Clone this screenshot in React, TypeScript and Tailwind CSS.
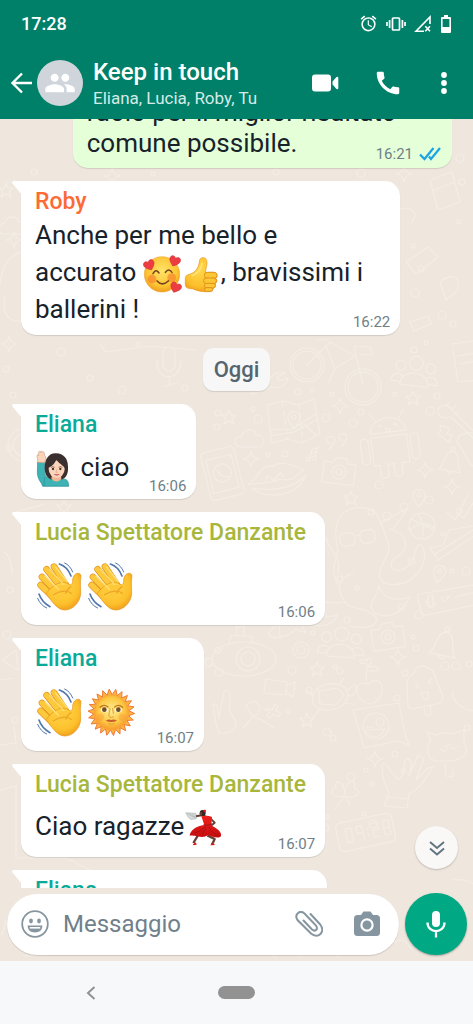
import type { ReactNode } from 'react';
import { MdAccessAlarm, MdCall, MdPeople } from 'react-icons/md';

type Message = {
  id: number;
  author: string;
  color: string;
  lines: ReactNode[];
  time: string;
  body: string;
  bubble?: string;
};

const TEAL = 'text-[#0aaa99]';
const LIME = 'text-[#a8b73c]';
const ORANGE = 'text-[#fc6a35]';

/* ---------- emoji ---------- */

function EmojiGradients() {
  return (
    <svg className="absolute h-0 w-0" aria-hidden="true">
      <defs>
        <radialGradient id="face" cx="0.5" cy="0.4" r="0.6">
          <stop offset="0" stopColor="#ffe36b" />
          <stop offset="0.7" stopColor="#fdc633" />
          <stop offset="1" stopColor="#f0a01f" />
        </radialGradient>
        <radialGradient id="palm" cx="0.45" cy="0.35" r="0.7">
          <stop offset="0" stopColor="#ffd84a" />
          <stop offset="0.7" stopColor="#fdc02c" />
          <stop offset="1" stopColor="#ee9a18" />
        </radialGradient>
        <radialGradient id="sun" cx="0.5" cy="0.45" r="0.55">
          <stop offset="0" stopColor="#ffee96" />
          <stop offset="0.65" stopColor="#fdca45" />
          <stop offset="1" stopColor="#f79a2c" />
        </radialGradient>
        <linearGradient id="dress" x1="0" y1="0" x2="0" y2="1">
          <stop offset="0" stopColor="#f1201b" />
          <stop offset="1" stopColor="#c50d10" />
        </linearGradient>
      </defs>
    </svg>
  );
}

function WavingHand() {
  const fingers = ['M121 566 L162 606', 'M125 542 L174 592', 'M139 519 L188 580', 'M161 511 L202 574'];
  return (
    <svg role="img" aria-label="👋" viewBox="104 494 153 153" className="-my-1 inline-block size-[51px] align-middle">
      {fingers.map((d) => (
        <g key={d} fill="none" strokeLinecap="round">
          <path d={d} stroke="#e2921b" strokeWidth="20" />
          <path d={d} stroke="#fdc93c" strokeWidth="16" />
        </g>
      ))}
      <path
        d="M137 592 C150 573 176 552 199 560 C209 566 214 570 217 556 C216 544 222 532 232 531 C242 530 243 539 241 547 C239 559 241 574 241 591 C240 617 218 641 194 641 C170 641 157 617 137 592Z"
        fill="url(#palm)"
        stroke="#e2921b"
        strokeWidth="2"
      />
      <path d="M150 588 L178 566 L202 566 L212 578 L190 600 L160 604Z" fill="#fdc83a" />
      <path d="M158 596 C181 582 203 581 214 592 M213 570 C203 577 197 583 196 592" fill="none" stroke="#eda526" strokeWidth="4" />
      <path d="M134 539 L174 579 M148 519 L190 565 M166 512 L201 556" stroke="#ffdf76" strokeWidth="4" strokeLinecap="round" />
      <g fill="none" stroke="#5277ad" strokeLinecap="round">
        <path d="M177 503 C192 508 205 520 212 539" strokeWidth="5" />
        <path d="M193 500 C204 505 212 514 217 527" strokeWidth="3" />
        <path d="M116 593 C121 608 133 622 149 631" strokeWidth="5" />
        <path d="M112 606 C117 619 127 630 139 635" strokeWidth="3" />
      </g>
    </svg>
  );
}

function SunFace() {
  const rays = Array.from({ length: 44 }, (_, i) => {
    const radius = i % 2 ? 53 : 70;
    const angle = (i * Math.PI) / 22 + 0.05;
    return `${(331 + radius * Math.cos(angle)).toFixed(1)},${(244 + radius * Math.sin(angle)).toFixed(1)}`;
  }).join(' ');
  return (
    <svg role="img" aria-label="🌞" viewBox="255 168 153 153" className="-my-1 inline-block size-[51px] align-middle">
      <polygon points={rays} fill="#ffb340" stroke="#ee7a34" strokeWidth="3" />
      <circle cx="331" cy="244" r="52" fill="url(#sun)" stroke="#f5a23a" strokeWidth="2" />
      <circle cx="298" cy="259" r="11" fill="#f89a3d" opacity="0.45" />
      <circle cx="364" cy="259" r="11" fill="#f89a3d" opacity="0.45" />
      <path d="M297 229 Q309 218 321 228 M341 228 Q353 218 365 229" fill="none" stroke="#bd7622" strokeWidth="4" strokeLinecap="round" />
      <ellipse cx="310" cy="237" rx="11" ry="7" fill="#fff8dc" />
      <ellipse cx="352" cy="237" rx="11" ry="7" fill="#fff8dc" />
      <circle cx="310" cy="236" r="7" fill="#704e2c" />
      <circle cx="352" cy="236" r="7" fill="#704e2c" />
      <path d="M327 232 C327 244 320 255 326 258 Q331 261 337 258 M335 232 L337 247" fill="none" stroke="#e2992e" strokeWidth="3" strokeLinecap="round" />
      <path d="M314 269 Q324 263 331 267 Q338 263 348 269 Q331 277 314 269Z" fill="#c95c2c" />
      <path d="M322 278 Q331 282 341 278" fill="none" stroke="#e69a34" strokeWidth="3" />
    </svg>
  );
}

function Heart({ x, y, turn }: { x: number; y: number; turn: number }) {
  return (
    <path
      transform={`translate(${x} ${y}) rotate(${turn})`}
      d="M0 16 C-9 9 -18 2 -16 -7 C-14 -15 -4 -16 0 -8 C4 -16 14 -15 16 -7 C18 2 9 9 0 16Z"
      fill="#ee3c43"
      stroke="#c9262f"
      strokeWidth="1.5"
    />
  );
}

function SmilingHearts() {
  return (
    <svg role="img" aria-label="🥰" viewBox="429 250 117 117" className="-my-1 inline-block size-[39px] align-middle">
      <circle cx="486" cy="308" r="53" fill="url(#face)" stroke="#e99a22" strokeWidth="1.5" />
      <circle cx="456" cy="322" r="13" fill="#f5732b" opacity="0.55" />
      <circle cx="515" cy="318" r="13" fill="#f5732b" opacity="0.55" />
      <path d="M459 306 Q467 290 477 304 M496 302 Q506 288 516 302" fill="none" stroke="#75431f" strokeWidth="4.5" strokeLinecap="round" />
      <path d="M471 328 Q487 345 505 328" fill="none" stroke="#75431f" strokeWidth="5" strokeLinecap="round" />
      <Heart x={448} y={280} turn={-24} />
      <Heart x={524} y={268} turn={20} />
      <Heart x={527} y={347} turn={22} />
    </svg>
  );
}

function ThumbsUp() {
  return (
    <svg role="img" aria-label="👍" viewBox="546 250 117 117" className="-my-1 inline-block size-[39px] align-middle">
      <path
        d="M556 321 C556 309 565 309 574 306 C588 300 596 287 598 272 C598 262 602 258 610 258 C621 258 623 272 619 286 L616 302 L642 302 C653 304 654 317 647 320 C653 324 651 334 645 336 C649 341 646 349 639 350 C639 357 633 360 624 360 C605 361 589 357 577 351 C563 352 556 348 556 338Z"
        fill="url(#palm)"
        stroke="#e2921b"
        strokeWidth="2"
      />
      <g fill="#fdc634" stroke="#dc8b1c" strokeWidth="2.5">
        <rect x="613" y="302" width="38" height="18" rx="9" />
        <rect x="611" y="319" width="38" height="17" rx="8" />
        <rect x="613" y="335" width="33" height="14" rx="7" />
        <rect x="614" y="348" width="24" height="11" rx="5" />
      </g>
      <path d="M576 312 C592 306 604 294 606 275" fill="none" stroke="#ffe27a" strokeWidth="5" strokeLinecap="round" />
    </svg>
  );
}

function WomanRaisingHand() {
  return (
    <svg role="img" aria-label="🙋🏻‍♀️" viewBox="105 162 117 117" className="-my-1 inline-block size-[39px] align-middle">
      <path
        d="M113 198 L134 199 C134 215 132 232 138 242 C150 250 190 246 199 251 C205 256 206 264 206 271 L128 271 C126 260 113 252 112 230Z"
        fill="#3fb3b4"
        stroke="#218c97"
        strokeWidth="2"
      />
      <path d="M132 270 C133 259 131 248 136 242" fill="none" stroke="#218c97" strokeWidth="2" />
      <path
        d="M114 199 L111 181 C111 174 115 175 116 179 L116 168 C119 163 122 166 122 170 C123 163 127 164 128 169 C132 166 134 171 133 178 L137 181 C139 190 135 195 133 200Z"
        fill="#fbd4ba"
        stroke="#d69f83"
        strokeWidth="2"
      />
      <path
        d="M168 172 C146 171 134 190 134 215 C134 237 143 247 157 251 L187 250 C200 244 205 231 204 213 C204 187 191 173 168 172Z"
        fill="#3b3030"
      />
      <path d="M156 236 L183 236 L184 249 Q170 264 154 249Z" fill="#edb797" />
      <ellipse cx="170" cy="219" rx="24" ry="26" fill="#fbd5bb" />
      <path d="M145 216 C155 211 165 202 169 191 C178 203 190 208 196 218 C198 195 188 182 170 181 C152 183 144 197 145 216Z" fill="#3b3030" />
      <path d="M153 214 Q158 210 164 214 M176 214 Q182 210 187 214" fill="none" stroke="#5d3a2b" strokeWidth="2" />
      <circle cx="159" cy="219" r="3.5" fill="#4b3326" />
      <circle cx="181" cy="219" r="3.5" fill="#4b3326" />
      <path d="M170 220 L168 229 L173 229" fill="none" stroke="#dc9f80" strokeWidth="2" />
      <path d="M161 234 Q170 243 180 234 Q170 236 161 234Z" fill="#c94a4d" />
    </svg>
  );
}

function Dancer() {
  return (
    <svg role="img" aria-label="💃🏿" viewBox="556 156 117 117" className="-my-1 inline-block size-[39px] align-middle">
      <path d="M561 167 L592 169 L593 185 L577 188 Q566 181 561 167Z" fill="#d5d9da" stroke="#a8aeb0" strokeWidth="1.5" />
      <path d="M563 169 L590 182 M570 169 L590 182 M580 169 L590 182" stroke="#999fa2" />
      <path d="M592 178 L613 174 L625 181" fill="none" stroke="#654234" strokeWidth="6" strokeLinejoin="round" />
      <path d="M635 184 L648 197 L635 208" fill="none" stroke="#654234" strokeWidth="6" strokeLinejoin="round" />
      <path d="M604 225 L584 258 M626 235 L648 246 L640 263" fill="none" stroke="#654234" strokeWidth="7" strokeLinejoin="round" />
      <path d="M588 256 L582 265 L594 263 L592 257Z M639 258 L651 264 L635 265Z" fill="#df1919" />
      <circle cx="612" cy="168" r="9" fill="#302723" />
      <ellipse cx="607" cy="170" rx="4" ry="6" fill="#654234" />
      <circle cx="618" cy="162" r="4" fill="#e11b1c" />
      <path
        d="M608 178 Q625 173 640 180 L638 205 C652 214 671 224 667 238 C658 247 641 238 627 234 C612 247 594 233 573 236 C575 219 594 207 617 204Z"
        fill="url(#dress)"
      />
      <path d="M621 208 Q602 226 585 229 M630 210 Q639 229 659 236 M622 211 L612 230" fill="none" stroke="#9c0c12" strokeWidth="2" />
      <path d="M614 203 Q630 208 640 200" fill="none" stroke="#87151a" strokeWidth="2" />
    </svg>
  );
}

/* ---------- chat wallpaper ---------- */

const stars = [[413, 398], [229, 417], [351, 498], [317, 669], [307, 720], [64, 507], [6, 190], [440, 140], [204, 820]];
const sparkles = [[340, 406], [251, 459], [425, 470], [452, 487], [398, 657], [375, 759], [112, 176], [9, 344], [14, 240], [404, 174]];
const dots = [
  [298, 392, 3], [312, 390, 2], [258, 419, 4], [253, 409, 2], [326, 418, 4], [353, 423, 4], [268, 455, 2], [285, 454, 3],
  [361, 412, 3], [395, 394, 2], [430, 411, 4], [437, 396, 3], [332, 394, 2], [414, 350, 3], [426, 343, 2], [388, 430, 2],
  [379, 485, 4], [429, 500, 4], [404, 507, 4], [371, 512, 3], [387, 516, 4], [459, 511, 3], [443, 534, 2], [412, 561, 3],
  [452, 571, 2], [466, 571, 4], [413, 637, 2], [416, 648, 3], [419, 615, 4], [347, 620, 3], [313, 633, 2], [292, 670, 4],
  [335, 667, 2], [340, 671, 3], [405, 673, 3], [445, 666, 4], [456, 666, 4], [469, 664, 3], [309, 690, 3], [288, 711, 2],
  [397, 698, 3], [327, 732, 4], [333, 738, 3], [395, 754, 3], [403, 771, 2], [366, 770, 2], [351, 777, 4], [372, 784, 2],
  [364, 814, 2], [373, 824, 4], [327, 817, 2], [326, 828, 3], [6, 369, 3], [13, 395, 3], [61, 352, 4], [90, 378, 3],
  [122, 390, 4], [217, 427, 3], [219, 672, 4], [218, 650, 3], [9, 448, 3], [7, 635, 4], [15, 720, 3], [218, 413, 3],
  [413, 144, 2], [460, 158, 4], [462, 182, 3], [413, 246, 2], [421, 269, 3], [442, 315, 4], [453, 324, 3], [415, 293, 4],
  [459, 222, 2], [34, 172, 3], [153, 174, 2], [276, 172, 3], [361, 173, 4], [185, 388, 3], [138, 344, 2], [467, 728, 3],
  [208, 570, 2], [10, 590, 3], [340, 579, 3], [357, 588, 2], [401, 607, 3],
];

function Wallpaper() {
  return (
    <svg
      aria-hidden="true"
      viewBox="0 119 473 842"
      preserveAspectRatio="xMidYMin slice"
      className="absolute inset-0 h-full w-full"
      fill="none"
      stroke="#f4ede6"
      strokeWidth="1.2"
      strokeLinecap="round"
      strokeLinejoin="round"
    >
      <defs>
        <path id="star" d="M0 -7 L2 -2 L7 -2 L3 2 L5 7 L0 4 L-5 7 L-3 2 L-7 -2 L-2 -2Z" />
        <path id="sparkle" d="M0 -8 Q1 -1 8 0 Q1 1 0 8 Q-1 1 -8 0 Q-1 -1 0 -8Z" />
        <g id="camera">
          <path d="M-16 -9 L-7 -9 L-4 -14 L6 -14 L8 -9 L16 -9 L16 12 L-16 12Z" />
          <circle r="7" />
          <circle r="3" />
        </g>
        <g id="people">
          <circle cy="-11" r="7" />
          <circle cx="-15" cy="-7" r="5" />
          <circle cx="15" cy="-7" r="5" />
          <path d="M-14 12 C-15 -5 15 -5 14 12Z M-12 3 C-19 -1 -23 3 -23 9 L-14 9 M12 3 C19 -1 23 3 23 9 L14 9" />
        </g>
        <g id="bell">
          <path d="M-11 8 C-5 1 -9 -10 0 -12 C9 -10 5 1 11 8Z" />
          <path d="M-3 8 Q0 14 3 8" />
          <circle cy="-14" r="2" />
        </g>
        <g id="pin">
          <path d="M0 9 C-4 3 -7 0 -6 -4 C-4 -10 4 -10 6 -4 C7 0 4 3 0 9Z" />
          <circle cy="-3" r="2" />
        </g>
        <path id="cloud" d="M-9 8 C-17 7 -17 -2 -8 -3 C-7 -11 5 -11 6 -4 C16 -4 16 7 8 8Z" />
      </defs>

      {stars.map(([x, y]) => <use key={`${x}-${y}`} href="#star" x={x} y={y} />)}
      {sparkles.map(([x, y]) => <use key={`${x}-${y}`} href="#sparkle" x={x} y={y} />)}
      {dots.map(([x, y, r]) => <circle key={`${x}-${y}`} cx={x} cy={y} r={r} />)}

      <use href="#cloud" x="250" y="439" />
      <use href="#cloud" x="13" y="226" />
      <use href="#camera" transform="translate(339 472) rotate(7)" />
      <use href="#camera" transform="translate(388 637) rotate(-9)" />
      <use href="#people" transform="translate(415 374) rotate(7)" />
      <use href="#people" x="341" y="645" transform="rotate(4 341 645)" />
      <use href="#bell" transform="translate(451 463) rotate(10)" />
      <use href="#bell" transform="translate(444 646) rotate(12) scale(1.2)" />
      <use href="#pin" x="419" y="498" />
      <use href="#pin" transform="translate(439 574) rotate(12)" />

      {/* bicycle */}
      <circle cx="307" cy="365" r="17" />
      <circle cx="307" cy="365" r="14" />
      <circle cx="363" cy="387" r="18" />
      <circle cx="363" cy="387" r="15" />
      <path d="M307 365 L330 342 L355 356 L335 369 L326 346 M363 385 L354 346 L370 347 L373 355 L360 354 M318 340 L329 339 M335 369 L329 382" />
      {/* microphone and spanner */}
      <rect x="163" y="347" width="12" height="24" rx="6" />
      <path d="M157 361 C156 382 181 382 181 361 M169 376 L170 386 M162 387 L177 383" />
      <path d="M248 389 L268 383 C270 374 279 371 285 373 L277 377 L279 381 L288 378 C287 386 278 389 272 387 L252 394Z" />
      {/* map */}
      <path d="M267 405 L283 401 L298 405 L314 399 L320 434 L302 443 L287 439 L272 443Z M269 430 L292 429 L316 414 M270 436 L294 432 L318 419 M304 424 L316 435" />
      <path d="M282 402 L288 439 M299 405 L303 442" strokeDasharray="5 4" />
      <use href="#pin" x="294" y="420" />
      {/* android */}
      <g transform="translate(390 447) rotate(-7)">
        <path d="M-18 -15 C-17 -34 17 -34 18 -15Z M-12 -28 L-17 -36 M12 -28 L18 -36 M-18 -11 L18 -11 L18 17 L10 17 L10 28 Q5 33 2 28 L2 17 L-4 17 L-4 28 Q-9 33 -12 28 L-12 17 L-18 17Z" />
        <rect x="-29" y="-11" width="8" height="26" rx="4" />
        <rect x="21" y="-11" width="8" height="26" rx="4" />
        <circle cx="-7" cy="-22" r="1" />
        <circle cx="8" cy="-22" r="1" />
      </g>
      {/* lips, quotes, note, bolt */}
      <path d="M248 485 C258 478 262 463 273 466 C281 460 292 465 304 470 C293 476 296 482 280 479 C269 484 262 482 248 485Z M252 488 C263 499 296 499 306 475 C292 490 271 491 252 488 M266 482 L267 476 L274 480 L280 473 L284 477" />
      <path d="M329 449 C335 445 336 438 333 437 C325 434 325 445 332 443 M341 446 C347 442 348 435 345 434 C337 431 337 442 344 440" />
      <path d="M309 459 L312 450 L318 447 L315 457 M311 454 L317 451" />
      <circle cx="308" cy="459" r="2" />
      <circle cx="314" cy="458" r="2" />
      <path d="M440 425 L449 428 L447 434 L452 435 L449 442 L437 433 L441 431Z" />
      {/* phone */}
      <g transform="rotate(-14 222 472)">
        <rect x="205" y="449" width="34" height="49" rx="4" />
        <rect x="209" y="457" width="26" height="34" />
        <circle cx="222" cy="473" r="9" />
        <path d="M218 469 Q219 477 227 478" />
      </g>
      {/* guitar */}
      <path d="M438 413 C437 404 448 403 452 410 L480 437 M438 413 C442 420 447 418 451 417 L473 438 M447 405 L450 402 M453 408 L456 405 M455 414 L458 411 M473 433 C463 432 457 435 457 443 C465 450 465 461 473 466" />
      {/* octopus */}
      <path d="M338 585 C329 569 337 560 338 550 C335 539 331 512 355 508 C384 504 381 531 388 541 C393 555 377 566 380 577 C383 588 405 587 416 575 C430 561 424 542 418 545 C413 556 413 567 401 570 C387 572 389 560 398 556 C410 548 408 533 389 529 M380 523 L408 508 L393 529 M353 574 C336 576 337 591 345 602 C349 610 367 607 375 616 C381 625 367 630 350 626 M379 585 C377 601 365 602 375 613 C387 620 402 614 410 597 C392 603 381 596 379 585 M326 538 C330 553 341 553 338 573 M305 616 C308 595 330 605 345 602 M306 617 C312 631 334 627 337 615 C323 620 320 611 314 608" />
      <rect x="340" y="533" width="15" height="13" rx="5" transform="rotate(-9 347 540)" />
      <rect x="360" y="530" width="15" height="13" rx="5" transform="rotate(-9 367 536)" />
      <path d="M354 536 L361 535" />
      {/* ball, shoe, double tick */}
      <circle cx="422" cy="526" r="13" />
      <path d="M410 530 Q422 519 434 528 M418 514 Q426 526 422 539 M411 519 L434 530" />
      <path d="M430 548 L443 545 L449 530 L473 526 M430 548 L438 560 L478 533 M435 554 L473 530" />
      <path d="M447 512 L455 520 L468 495 M458 514 L464 518 L476 498" />
      {/* voice message card */}
      <path d="M480 584 L420 594 Q417 594 418 598 L421 611 Q422 616 427 615 L480 604 M441 598 L450 596 L444 602Z M455 597 L480 591" />
      <rect x="428" y="595" width="5" height="11" rx="2" />
      <path d="M426 601 Q430 613 436 603" />
      {/* submarine */}
      <ellipse cx="244" cy="659" rx="32" ry="17" />
      <circle cx="248" cy="659" r="12" />
      <circle cx="248" cy="659" r="7" />
      <path d="M229 644 L231 635 L253 637 L252 643 M237 634 L236 619 L244 618 L244 635 M236 623 L244 621 M236 628 L244 626 M213 660 C202 652 202 674 213 664" />
      {/* fish, gear, video camera */}
      <path d="M268 634 C277 620 290 620 297 625 L307 618 L302 626 L306 633 L296 629 C288 637 274 641 268 634Z M279 623 L280 637" />
      <circle cx="301" cy="650" r="4" />
      <circle cx="301" cy="650" r="8" strokeDasharray="4 2" />
      <path d="M266 679 L287 682 L286 695 L264 693Z M287 685 L295 682 L293 697 L286 692 M267 708 L272 710 L275 704 L278 706 L276 711 L281 713 L279 717 L273 714 L270 718 L267 716 L270 711 L265 710Z" />
      {/* turtle and cherry */}
      <ellipse cx="330" cy="697" rx="18" ry="13" transform="rotate(-14 330 697)" />
      <path d="M319 691 L337 688 L344 695 L336 705 L320 704Z M312 695 L306 691 M320 709 L313 717 M346 703 L355 705 M340 684 L344 678 M348 690 Q357 680 356 690 Q354 698 348 695" />
      <path d="M368 684 C351 677 355 704 372 704 C389 696 383 671 368 684Z M366 681 L367 664 C355 664 360 656 367 661 C367 655 376 658 368 667 C379 664 385 672 369 671" />
      {/* ice lolly */}
      <path d="M408 707 L407 681 C409 675 415 676 416 668 C425 663 434 669 436 679 L443 697 Q443 703 436 704 L412 709Z M424 708 L426 716 L431 714 L430 706 M415 683 L419 685 L416 688 M432 679 L428 682 L432 684 M421 693 L428 692 Q429 702 424 699Z" />
      {/* sticker */}
      <path d="M353 710 L399 703 L405 734 L409 745 L398 741 L364 748Z" />
      <circle cx="376" cy="726" r="13" />
      <path d="M366 727 L372 727 M365 730 Q376 744 385 729 L367 730" />
      <circle cx="380" cy="722" r="4" />
      {/* cat, hand, clover */}
      <path d="M434 761 C425 755 427 744 431 740 L427 732 L437 735 Q444 731 452 734 L464 730 L464 742 C472 757 459 760 449 761Z M445 747 L450 744 M448 748 Q445 753 440 749 M451 747 Q454 751 458 746 M445 763 L446 776 L453 777 L453 770 M480 710 C463 714 451 700 453 691" />
      <path d="M384 806 L407 808 L409 793 C421 790 426 776 433 767 L428 768 L416 780 L424 758 L418 755 L409 776 C413 763 411 758 406 759 C402 765 407 776 398 779 C386 768 384 758 382 766 C382 778 385 784 389 793Z M386 797 L408 799" />
      <path d="M345 796 C331 799 328 789 336 788 C333 778 344 780 345 794 C345 779 358 778 354 788 C365 792 354 800 345 796 M345 796 L334 810 M345 796 L350 805" />
      {/* clock */}
      <g transform="rotate(-12 365 832)">
        <rect x="337" y="818" width="57" height="29" rx="5" />
        <path d="M346 825 H352 V839 H346Z M363 832 H357 V825 H363 V839 M368 829 V830 M368 835 V836 M373 825 H379 V832 H373 V839 H379 M384 825 H390 V839 H384Z M384 832 H390" />
      </g>
      {/* left edge */}
      <circle cx="24" cy="445" r="16" />
      <circle cx="24" cy="445" r="11" />
      <path d="M0 284 C4 252 20 254 24 250 M5 296 Q0 322 22 321 M12 513 L45 504 M4 552 Q12 557 12 574 M0 680 L14 678 M2 660 L16 650 L18 670Z M0 745 L16 743 L14 726 M0 790 L16 786 V858 H66 L90 870 M100 345 L106 352 L150 346 L196 350" />
      <path d="M216 724 L213 705 Q217 700 219 718 L224 692 Q233 685 229 710 L236 722 Q236 735 219 733Z M243 728 L253 717 L262 720 L274 728 M246 705 Q256 697 260 708 Q255 725 246 705Z" />
      <path d="M402 128 L412 123 L416 131 M398 210 C412 204 420 214 411 223 M430 180 L452 172 L460 202 L438 210Z M434 190 L455 182 M406 262 L428 247 L438 257 L416 274Z M440 282 C452 270 464 280 456 292 L446 300Z M410 322 L428 316 L431 324 L414 331Z M452 344 L480 340 M453 350 L458 382 L480 380 M458 356 L480 352 M460 364 L480 360" />
      <path d="M18 946 L80 942 L76 953 L24 956 M150 955 L156 947 L168 952 M232 952 L262 946 L276 958 M300 956 Q320 944 340 957 M392 944 Q402 934 412 950 M6 920 L2 935 M420 850 C424 836 437 842 434 854 M452 880 Q470 878 480 890" />
    </svg>
  );
}

/* ---------- bars ---------- */

function StatusBar() {
  return (
    <div className="flex h-[47px] items-center justify-between pr-[21px] pl-[21px]">
      <span className="text-[18px] font-medium">17:28</span>
      <div className="flex items-center gap-[8px]">
        <MdAccessAlarm className="size-[19px]" />
        <svg viewBox="0 0 20 16" className="h-[16px] w-[20px]" fill="none" stroke="currentColor" strokeWidth="1.7">
          <rect x="6.5" y="2" width="7" height="12" rx="0.8" />
          <path d="M3.6 4 V12 M16.4 4 V12 M1 6 V10 M19 6 V10" />
        </svg>
        <svg viewBox="0 0 18 18" className="size-[18px]" fill="none" stroke="currentColor" strokeWidth="1.6">
          <path d="M10 16.3 H2 L16 2 V9 M11.3 11.3 L16 16.3 M16 11.3 L11.3 16.3" />
        </svg>
        <svg viewBox="0 0 12 18" className="h-[18px] w-[12px]" fill="currentColor">
          <path fillRule="evenodd" d="M4 0 H8 V2 H10 Q11 2 11 3 V17 Q11 18 10 18 H2 Q1 18 1 17 V3 Q1 2 2 2 H4Z M2.6 4 V12 H9.4 V4Z" />
        </svg>
      </div>
    </div>
  );
}

function ChatHeader() {
  return (
    <div className="flex h-[72px] items-center pr-[22px] pl-[10px]">
      <button type="button" aria-label="Indietro">
        <svg viewBox="0 0 22 22" className="size-[22px]" fill="none" stroke="currentColor" strokeWidth="2.4">
          <path d="M22 11 H2.5 M12 1.5 L2.5 11 L12 20.5" />
        </svg>
      </button>
      <span className="ml-[5px] flex size-[46px] shrink-0 items-center justify-center rounded-full bg-[#cfd5da]">
        <MdPeople className="size-[32px]" />
      </span>
      <div className="ml-[10px] min-w-0 flex-1 pt-[2px]">
        <h1 className="truncate text-[24px] leading-[28px] font-medium">Keep in touch</h1>
        <p className="truncate text-[17px] leading-[24px] text-[#d5ebe7]">Eliana, Lucia, Roby, Tu</p>
      </div>
      <div className="flex items-center">
        <button type="button" aria-label="Videochiamata">
          <svg viewBox="0 0 28 20" className="h-[20px] w-[28px]" fill="currentColor">
            <path d="M4 1.500 H17 Q20 1.500 20 4.500 V15.500 Q20 18.500 17 18.500 H4 Q1 18.500 1 15.500 V4.500 Q1 1.500 4 1.500Z M21.500 8.500 L25.500 4 Q27.300 3 27.300 5 V15 Q27.300 17 25.500 16 L21.500 11.500Z" />
          </svg>
        </button>
        <button type="button" aria-label="Chiama" className="ml-[34px]">
          <MdCall className="size-[30px]" />
        </button>
        <button type="button" aria-label="Altre opzioni" className="ml-[34px]">
          <svg viewBox="0 0 14 24" className="h-[24px] w-[14px]" fill="currentColor">
            <circle cx="7" cy="4" r="2.900" />
            <circle cx="7" cy="12" r="2.900" />
            <circle cx="7" cy="20" r="2.900" />
          </svg>
        </button>
      </div>
    </div>
  );
}

/* ---------- messages ---------- */

const messages: Message[] = [
  {
    id: 2,
    author: 'Eliana',
    color: TEAL,
    time: '16:06',
    body: 'leading-[55px] pr-[57px]',
    lines: [<><WomanRaisingHand /> ciao</>],
  },
  {
    id: 3,
    author: 'Lucia Spettatore Danzante',
    color: LIME,
    time: '16:06',
    body: 'leading-[73px] pr-[57px]',
    lines: [<><WavingHand /><WavingHand /></>],
  },
  {
    id: 4,
    author: 'Eliana',
    color: TEAL,
    time: '16:07',
    body: 'leading-[73px] pr-[57px]',
    lines: [<><WavingHand /><SunFace /></>],
  },
  {
    id: 5,
    author: 'Lucia Spettatore Danzante',
    color: LIME,
    time: '16:07',
    body: 'leading-[53px] pr-[57px]',
    lines: [<>Ciao ragazze<Dancer /></>],
  },
  {
    id: 6,
    author: 'Eliana',
    color: TEAL,
    time: '16:08',
    body: 'leading-[37px] pr-[57px]',
    bubble: 'w-[71%]',
    lines: ['Come state?'],
  },
];

const roby: Message = {
  id: 1,
  author: 'Roby',
  color: ORANGE,
  time: '16:22',
  body: 'leading-[37px] pb-[3px]',
  bubble: 'w-[88%]',
  lines: [
    'Anche per me bello e',
    <>accurato <SmilingHearts /><ThumbsUp />, bravissimi i</>,
    'ballerini !',
  ],
};

function Bubble({ message }: { message: Message }) {
  return (
    <article
      className={`relative self-start rounded-[15px] rounded-tl-none bg-white pt-[6px] pr-[10px] pb-[4px] pl-[14px] shadow-[0_1px_1px_rgba(0,0,0,0.12)] ${message.bubble ?? ''}`}
    >
      <svg viewBox="0 0 10 14" className="absolute top-0 -left-[9px] h-[14px] w-[10px]" fill="#fff" aria-hidden="true">
        <path d="M10 0 H1.500 Q-0.500 0.500 0.500 2.500 L10 14Z" />
      </svg>
      <h2 className={`pr-[9px] text-[23px] leading-[30px] font-medium whitespace-nowrap ${message.color}`}>
        {message.author}
      </h2>
      <div className="grid">
        <div className={`col-start-1 row-start-1 text-[26px] whitespace-nowrap ${message.body}`}>
          {message.lines.map((line, i) => (
            <p key={i}>{line}</p>
          ))}
        </div>
        <time className="col-start-1 row-start-1 self-end justify-self-end text-[15px] leading-[18px] text-[#6f7f88]">
          {message.time}
        </time>
      </div>
    </article>
  );
}

function OwnBubble() {
  return (
    <article className="-mt-[27px] grid w-[88%] self-end rounded-[15px] rounded-tr-none bg-[#e5ffd9] pt-[5px] pr-[11px] pb-[5px] pl-[14px] shadow-[0_1px_1px_rgba(0,0,0,0.12)]">
      <div className="col-start-1 row-start-1 pb-[4px] text-[26px] leading-[31px] whitespace-nowrap">
        <p>ruolo per il miglior risultato</p>
        <p>comune possibile.</p>
      </div>
      <div className="col-start-1 row-start-1 flex items-center gap-[6px] self-end justify-self-end text-[#6f7f88]">
        <time className="text-[15px] leading-[18px]">16:21</time>
        <svg viewBox="0 0 22 14" className="h-[14px] w-[22px]" fill="none" stroke="#1ba4e4" strokeWidth="2.200" role="img" aria-label="Letto">
          <path d="M1 7.500 L5.500 12 L14.500 1 M10 9.500 L12 12 L21 1" />
        </svg>
      </div>
    </article>
  );
}

function Composer() {
  return (
    <form className="relative flex items-center gap-[6px] pt-[5px] pr-[6px] pb-[6px] pl-[7px]" onSubmit={(e) => e.preventDefault()}>
      <div className="flex h-[61px] min-w-0 flex-1 items-center rounded-full bg-white pr-[18px] pl-[14px] text-[#8696a0] shadow-[0_1px_1px_rgba(0,0,0,0.15)]">
        <button type="button" aria-label="Emoji">
          <svg viewBox="0 0 28 28" className="size-[28px]" fill="none" stroke="currentColor" strokeWidth="1.800">
            <circle cx="14" cy="14" r="12.800" />
            <ellipse cx="10" cy="11" rx="1.900" ry="2.400" fill="currentColor" stroke="none" />
            <ellipse cx="18" cy="11" rx="1.900" ry="2.400" fill="currentColor" stroke="none" />
            <path d="M6.500 15.500 H21.500 Q21 22.500 14 22.500 Q7 22.500 6.500 15.500Z" fill="currentColor" stroke="none" />
            <path d="M8.800 17.800 H19.200" stroke="#fff" strokeWidth="1.600" />
          </svg>
        </button>
        <input
          type="text"
          aria-label="Messaggio"
          placeholder="Messaggio"
          className="ml-[14px] min-w-0 flex-1 bg-transparent text-[24px] text-[#111b21] outline-none placeholder:text-[#71818b]"
        />
        <button type="button" aria-label="Allega">
          <svg viewBox="0 0 28 26" className="h-[26px] w-[28px]" fill="none" stroke="currentColor" strokeWidth="2" strokeLinecap="round">
            <path d="M15.500 3 L25.200 13.500 C31 21 23 28.500 16 22.500 L2.500 9 C-1 3.500 4.500 -1.500 9.500 2.500 L21 14.500 C23.500 18.500 20 21 17 18.500 L8.500 9.500" />
          </svg>
        </button>
        <button type="button" aria-label="Fotocamera" className="ml-[30px]">
          <svg viewBox="0 0 28 26" className="h-[26px] w-[28px]" fill="currentColor">
            <path d="M10.500 0.500 H17.500 L20 4 H23.500 Q27 4 27 7.500 V21.500 Q27 25 23.500 25 H4.500 Q1 25 1 21.500 V7.500 Q1 4 4.500 4 H8Z" />
            <circle cx="14" cy="14" r="5.600" fill="none" stroke="#fff" strokeWidth="2.200" />
          </svg>
        </button>
      </div>
      <button
        type="button"
        aria-label="Messaggio vocale"
        className="flex size-[62px] shrink-0 items-center justify-center rounded-full bg-[#00a884] shadow-[0_1px_2px_rgba(0,0,0,0.3)]"
      >
        <svg viewBox="0 0 20 28" className="h-[28px] w-[20px]" fill="none" stroke="#fff" strokeWidth="2.300">
          <rect x="6" y="1" width="8" height="16" rx="4" fill="#fff" stroke="none" />
          <path d="M1.500 12.500 C1.500 24 18.500 24 18.500 12.500 M10 21 V27.500" />
        </svg>
      </button>
    </form>
  );
}

export default function App() {
  return (
    <div className="flex h-screen flex-col overflow-hidden font-[Roboto,'Liberation_Sans',sans-serif] text-[#17222a]">
      <EmojiGradients />
      <header className="shrink-0 bg-[#008069] text-white">
        <StatusBar />
        <ChatHeader />
      </header>

      <main className="relative flex min-h-0 flex-1 flex-col bg-[#efe7de]">
        <Wallpaper />
        <section className="relative flex min-h-0 flex-1 flex-col gap-[13px] overflow-hidden px-[21px]">
          <OwnBubble />
          <Bubble message={roby} />
          <div className="self-center rounded-[11px] bg-[#f7f7f7] px-[11px] py-[7px] text-[22px] leading-[29px] font-medium text-[#54656f] shadow-[0_1px_1px_rgba(0,0,0,0.12)]">
            Oggi
          </div>
          {messages.map((message) => (
            <Bubble key={message.id} message={message} />
          ))}
        </section>
        <button
          type="button"
          aria-label="Vai in fondo"
          className="absolute right-[15px] bottom-[92px] flex size-[43px] items-center justify-center rounded-full bg-[#f9f8f7] text-[#60737e] shadow-[0_1px_2px_rgba(0,0,0,0.2)]"
        >
          <svg viewBox="0 0 16 16" className="size-[16px]" fill="none" stroke="currentColor" strokeWidth="1.900">
            <path d="M1 2 L8 8 L15 2 M1 8.500 L8 14.500 L15 8.500" />
          </svg>
        </button>
        <Composer />
      </main>

      <nav className="grid h-[63px] shrink-0 grid-cols-3 items-center bg-[#f7f8fa] text-[#929292]">
        <button type="button" aria-label="Indietro" className="ml-[25px] justify-self-center">
          <svg viewBox="0 0 10 14" className="h-[14px] w-[10px]" fill="none" stroke="currentColor" strokeWidth="2">
            <path d="M8.500 1 L2 7 L8.500 13" />
          </svg>
        </button>
        <button type="button" aria-label="Home" className="h-[13px] w-[37px] justify-self-center rounded-full bg-[#929292]" />
      </nav>
    </div>
  );
}
